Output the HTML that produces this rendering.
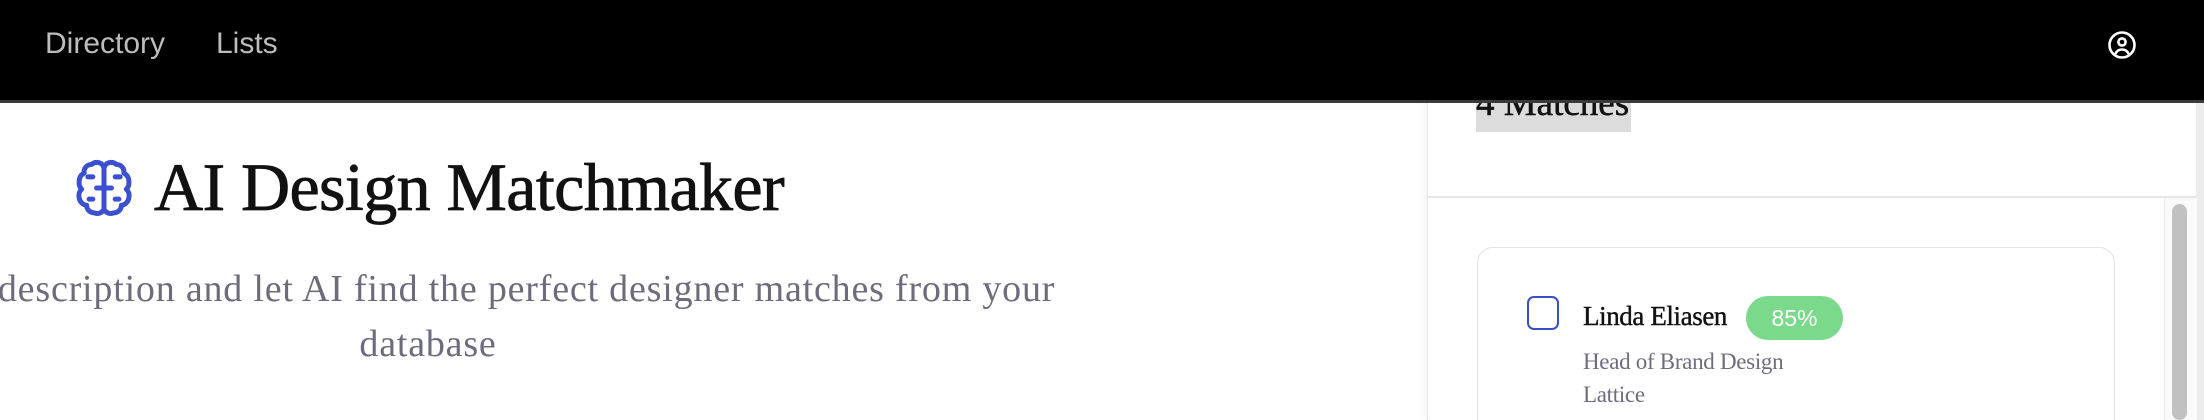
<!DOCTYPE html>
<html><head><meta charset="utf-8"><style>
html,body{margin:0;padding:0;width:2204px;height:420px;overflow:hidden;background:#fff;font-family:"Liberation Serif",serif}
#w{position:relative;width:2204px;height:420px;overflow:hidden}
.nav{position:absolute;left:0;top:0;width:2204px;height:100px;background:#000;border-bottom:3px solid #3a3a3a;z-index:5}
.nav a{position:absolute;top:27px;font-family:"Liberation Sans",sans-serif;font-size:30px;color:#bdbdbd;text-decoration:none}
.title{position:absolute;left:154px;top:148px;font-size:68px;color:#111;letter-spacing:-0.6px;white-space:nowrap;-webkit-text-stroke:0.8px #111}
.sub{position:absolute;left:-307px;width:1470px;top:262px;text-align:center;font-size:38px;line-height:55px;color:#6d6c7c;letter-spacing:0.8px}
.panel{position:absolute;left:1427px;top:0;width:769px;height:420px;background:#fff;border-left:1px solid #e6e6e6;box-shadow:-4px 0 6px rgba(0,0,0,0.04)}
.right{position:absolute;left:2196px;top:0;width:8px;height:420px;background:#ececec}
.matches{position:absolute;left:1476px;top:72px;width:155px;height:60px;background:#dcdcdc;font-size:37px;line-height:64px;color:#111;white-space:nowrap;overflow:hidden;-webkit-text-stroke:0.5px #111}
.div{position:absolute;left:1428px;top:196px;width:768px;height:2px;background:#e6e6e6}
.track{position:absolute;left:2164px;top:198px;width:32px;height:222px;border-left:1px solid #eee;background:#fafafa}
.thumb{position:absolute;left:2172px;top:204px;width:15px;height:216px;background:#c1c1c1;border-radius:8px}
.card{position:absolute;left:1477px;top:247px;width:636px;height:190px;border:1.5px solid #e3e3e3;border-radius:16px;background:#fff}
.cb{position:absolute;left:1527px;top:296px;width:28px;height:30px;border:2px solid #3b4fc4;border-radius:7px}
.name{position:absolute;left:1583px;top:301px;font-size:27px;color:#111;letter-spacing:-0.4px;-webkit-text-stroke:0.4px #111}
.badge{position:absolute;left:1746px;top:296px;width:97px;height:44px;border-radius:22px;background:#7ad98b;color:#fff;font-family:"Liberation Sans",sans-serif;font-size:23px;line-height:44px;text-align:center}
.g{position:absolute;left:1583px;font-size:23px;color:#6d6c7c;letter-spacing:-0.3px}
</style></head><body><div id="w">
<div class="nav">
<a style="left:45px">Directory</a><a style="left:216px">Lists</a>
<svg style="position:absolute;left:2107px;top:30px" width="30" height="30" viewBox="0 0 30 30" fill="none" stroke="#fff" stroke-width="2.6"><circle cx="15" cy="15" r="12.5"/><circle cx="15" cy="12" r="3.6"/><path d="M8.5 24c1-3 3.5-4.5 6.5-4.5s5.5 1.5 6.5 4.5"/></svg>
</div>
<svg style="position:absolute;left:74px;top:157px" width="60" height="62" viewBox="0 0 24 25" fill="none" stroke="#3b4fd0" stroke-width="2" stroke-linecap="round" stroke-linejoin="round">
<path d="M12 4.5a3 3 0 0 0-5-1.5 3 3 0 0 0-3 3.5 3.5 3.5 0 0 0-2 3.5 3.5 3.5 0 0 0 1 3 3.5 3.5 0 0 0-1 3.5 3.5 3.5 0 0 0 3 3 3 3 0 0 0 3 3 3 3 0 0 0 4-1.5z"/>
<path d="M12 4.5a3 3 0 0 1 5-1.5 3 3 0 0 1 3 3.5 3.5 3.5 0 0 1 2 3.5 3.5 3.5 0 0 1-1 3 3.5 3.5 0 0 1 1 3.5 3.5 3.5 0 0 1-3 3 3 3 0 0 1-3 3 3 3 0 0 1-4-1.5z"/>
<path d="M12 12.5h-3M12 12.5h3M5.5 8h2M18.5 8h-2M6 17h1.5M18 17h-1.5"/>
</svg>
<div class="title">AI Design Matchmaker</div>
<div class="sub">Enter a role description and let AI find the perfect designer matches from your<br>database</div>
<div class="panel"></div>
<div class="right"></div>
<div class="matches">4 Matches</div>
<div class="div"></div>
<div class="track"></div>
<div class="thumb"></div>
<div class="card"></div>
<div class="cb"></div>
<div class="name">Linda Eliasen</div>
<div class="badge">85%</div>
<div class="g" style="top:349px">Head of Brand Design</div>
<div class="g" style="top:382px">Lattice</div>
</div></body></html>
